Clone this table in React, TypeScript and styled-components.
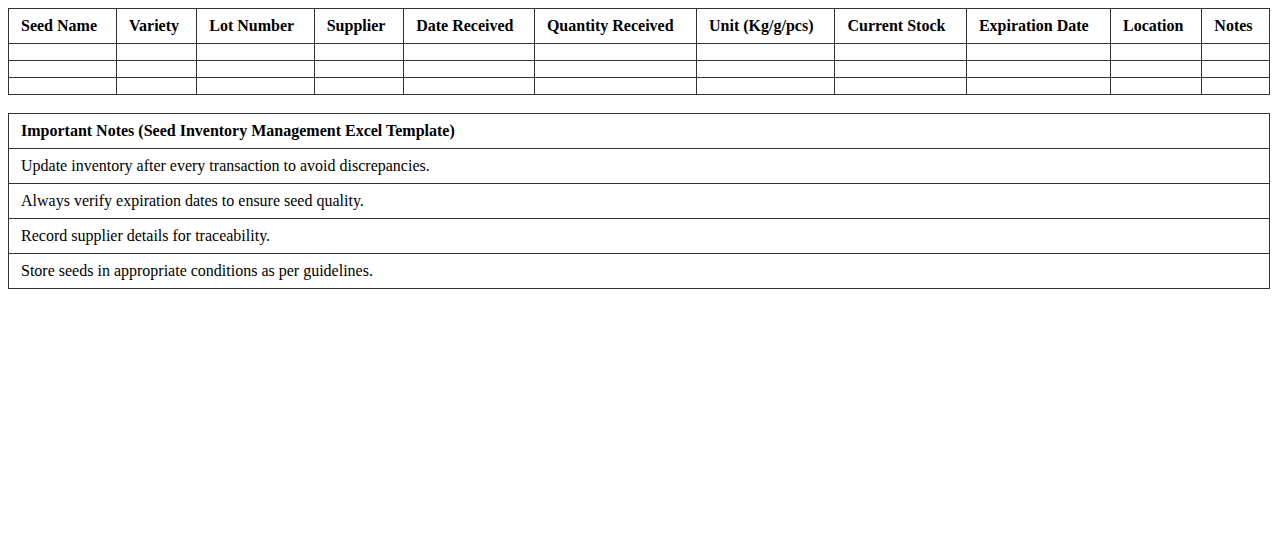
import * as React from 'react';
import styled, { createGlobalStyle } from 'styled-components';

const GlobalStyle = createGlobalStyle`
  body {
    margin: 8px;
    background: #ffffff;
    font-family: "Liberation Serif", "Times New Roman", serif;
    color: #000000;
  }
`;

const Table = styled.table`
  width: 100%;
  border-collapse: collapse;
  margin-bottom: 18px;
`;

const HeadCell = styled.th`
  border: 1px solid #333333;
  padding: 8px 12px;
  font-size: 16px;
  font-weight: bold;
  text-align: left;
`;

const Cell = styled.td`
  border: 1px solid #333333;
  padding: 8px 12px;
  font-size: 16px;
`;

const NoteTable = styled.table`
  width: 100%;
  border-collapse: collapse;
`;

const NoteCell = styled.td<{ $bold?: boolean }>`
  border: 1px solid #333333;
  padding: 8px 12px;
  font-size: 16px;
  line-height: 18px;
  font-weight: ${(p) => (p.$bold ? 'bold' : 'normal')};
  text-align: left;
`;

const columns = [
  'Seed Name',
  'Variety',
  'Lot Number',
  'Supplier',
  'Date Received',
  'Quantity Received',
  'Unit (Kg/g/pcs)',
  'Current Stock',
  'Expiration Date',
  'Location',
  'Notes',
];

const notes = [
  'Update inventory after every transaction to avoid discrepancies.',
  'Always verify expiration dates to ensure seed quality.',
  'Record supplier details for traceability.',
  'Store seeds in appropriate conditions as per guidelines.',
];

const App: React.FC = () => {
  return (
    <>
      <GlobalStyle />
      <Table>
        <thead>
          <tr>
            {columns.map((c) => (
              <HeadCell key={c}>{c}</HeadCell>
            ))}
          </tr>
        </thead>
        <tbody>
          {[0, 1, 2].map((r) => (
            <tr key={r}>
              {columns.map((c) => (
                <Cell key={c} />
              ))}
            </tr>
          ))}
        </tbody>
      </Table>

      <NoteTable>
        <tbody>
          <tr>
            <NoteCell $bold>Important Notes (Seed Inventory Management Excel Template)</NoteCell>
          </tr>
          {notes.map((n) => (
            <tr key={n}>
              <NoteCell>{n}</NoteCell>
            </tr>
          ))}
        </tbody>
      </NoteTable>
    </>
  );
};

export default App;
